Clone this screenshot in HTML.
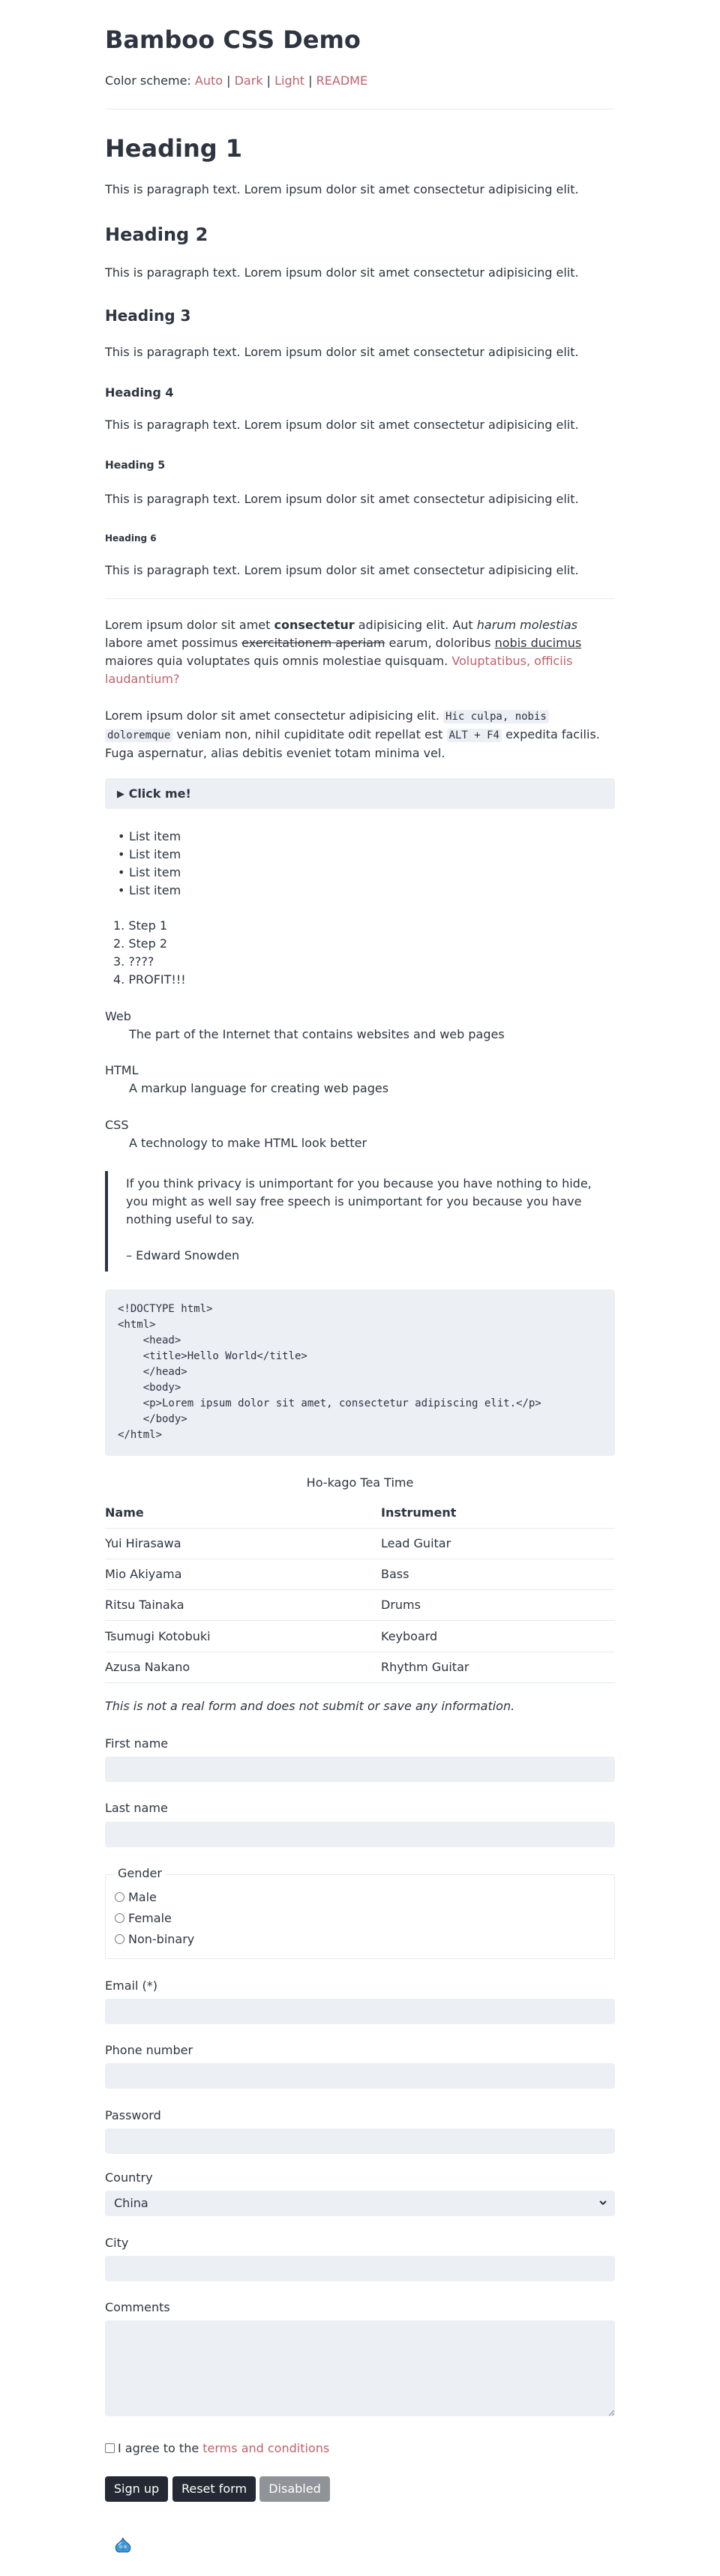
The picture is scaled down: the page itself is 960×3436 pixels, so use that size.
<!DOCTYPE html>
<html><head><meta charset="utf-8"><style>
*{box-sizing:border-box;margin:0;padding:0}
html,body{width:960px;height:3436px;background:#fff;overflow:hidden}
body{position:relative;font-family:"DejaVu Sans","Liberation Sans",sans-serif;font-size:16px;line-height:24px;color:#2e3440}
.a{position:absolute;left:140px;width:680px;white-space:nowrap}
h1,h2,h3,h4,h5,h6{font-weight:bold;line-height:1.2}
a{color:#bf616a;text-decoration:none}
.hr{position:absolute;left:140px;width:680px;height:1px;background:#e5e9f0}
code{font-family:"DejaVu Sans Mono",monospace;font-size:14px;background:#eceff4;border-radius:3px;padding:1px 3px}
.inp{position:absolute;left:140px;width:680px;background:#eceff4;border-radius:4px}
.btn{position:absolute;top:3303px;height:34px;line-height:34px;color:#fff;background:#242933;border-radius:4px;text-align:center;font-size:16px}
.radio{display:inline-block;width:13px;height:13px;border:1px solid #767676;border-radius:50%;vertical-align:-1px;margin-right:5px;background:#fff}
.row{position:absolute;left:140px;width:680px;height:41px;border-bottom:1.5px solid #e5e9f0}
.row span{position:absolute;top:8px}
.b{display:inline-block;width:15px}
</style></head><body>
<h1 class="a" style="top:34px;font-size:32px">Bamboo CSS Demo</h1>
<div class="a" style="top:96px">Color scheme: <a>Auto</a> | <a>Dark</a> | <a>Light</a> | <a>README</a></div>
<div class="hr" style="top:145px"></div>
<h1 class="a" style="top:179px;font-size:32px">Heading 1</h1>
<div class="a" style="top:241px">This is paragraph text. Lorem ipsum dolor sit amet consectetur adipisicing elit.</div>
<h2 class="a" style="top:299px;font-size:24px">Heading 2</h2>
<div class="a" style="top:352px">This is paragraph text. Lorem ipsum dolor sit amet consectetur adipisicing elit.</div>
<h3 class="a" style="top:409px;font-size:20px">Heading 3</h3>
<div class="a" style="top:458px">This is paragraph text. Lorem ipsum dolor sit amet consectetur adipisicing elit.</div>
<h4 class="a" style="top:514px;font-size:16px">Heading 4</h4>
<div class="a" style="top:555px">This is paragraph text. Lorem ipsum dolor sit amet consectetur adipisicing elit.</div>
<h5 class="a" style="top:613px;font-size:14px">Heading 5</h5>
<div class="a" style="top:654px">This is paragraph text. Lorem ipsum dolor sit amet consectetur adipisicing elit.</div>
<h6 class="a" style="top:711px;font-size:12px">Heading 6</h6>
<div class="a" style="top:749px">This is paragraph text. Lorem ipsum dolor sit amet consectetur adipisicing elit.</div>
<div class="hr" style="top:798px"></div>
<div class="a" style="top:822px">Lorem ipsum dolor sit amet <b>consectetur</b> adipisicing elit. Aut <i>harum molestias</i><br>labore amet possimus <s>exercitationem aperiam</s> earum, doloribus <u>nobis ducimus</u><br>maiores quia voluptates quis omnis molestiae quisquam. <a>Voluptatibus, officiis</a><br><a>laudantium?</a></div>
<div class="a" style="top:943px">Lorem ipsum dolor sit amet consectetur adipisicing elit. <code>Hic culpa, nobis</code><br><code>doloremque</code> veniam non, nihil cupiditate odit repellat est <code>ALT + F4</code> expedita facilis.<br>Fuga aspernatur, alias debitis eveniet totam minima vel.</div>
<div class="a" style="top:1038px;height:41px;background:#eceff4;border-radius:4px;padding:9px 0 0 16px;font-weight:bold"><span style="font-size:13px;vertical-align:1px">▶</span> Click me!</div>
<div class="a" style="top:1104px;left:157px"><span class="b">•</span>List item<br><span class="b">•</span>List item<br><span class="b">•</span>List item<br><span class="b">•</span>List item</div>
<div class="a" style="top:1223px;left:151px">1. Step 1<br>2. Step 2<br>3. ????<br>4. PROFIT!!!</div>
<div class="a" style="top:1344px">Web</div>
<div class="a" style="top:1368px;left:172px">The part of the Internet that contains websites and web pages</div>
<div class="a" style="top:1416px">HTML</div>
<div class="a" style="top:1440px;left:172px">A markup language for creating web pages</div>
<div class="a" style="top:1489px">CSS</div>
<div class="a" style="top:1513px;left:172px">A technology to make HTML look better</div>
<div style="position:absolute;left:140px;top:1562px;width:4px;height:134px;background:#2e3440"></div>
<div class="a" style="top:1567px;left:168px">If you think privacy is unimportant for you because you have nothing to hide,<br>you might as well say free speech is unimportant for you because you have<br>nothing useful to say.<br><br>– Edward Snowden</div>
<pre class="a" style="top:1720px;height:222px;background:#eceff4;border-radius:4px;padding:16px 17px;font-family:'DejaVu Sans Mono',monospace;font-size:14px;line-height:21px;white-space:pre">&lt;!DOCTYPE html&gt;
&lt;html&gt;
    &lt;head&gt;
    &lt;title&gt;Hello World&lt;/title&gt;
    &lt;/head&gt;
    &lt;body&gt;
    &lt;p&gt;Lorem ipsum dolor sit amet, consectetur adipiscing elit.&lt;/p&gt;
    &lt;/body&gt;
&lt;/html&gt;</pre>
<div class="a" style="top:1966px;text-align:center">Ho-kago Tea Time</div>
<div class="row" style="top:1998px;font-weight:bold"><span style="left:0">Name</span><span style="left:368px">Instrument</span></div>
<div class="row" style="top:2039px"><span style="left:0">Yui Hirasawa</span><span style="left:368px">Lead Guitar</span></div>
<div class="row" style="top:2080px"><span style="left:0">Mio Akiyama</span><span style="left:368px">Bass</span></div>
<div class="row" style="top:2121px"><span style="left:0">Ritsu Tainaka</span><span style="left:368px">Drums</span></div>
<div class="row" style="top:2163px"><span style="left:0">Tsumugi Kotobuki</span><span style="left:368px">Keyboard</span></div>
<div class="row" style="top:2204px"><span style="left:0">Azusa Nakano</span><span style="left:368px">Rhythm Guitar</span></div>
<div class="a" style="top:2264px;font-style:italic">This is not a real form and does not submit or save any information.</div>
<div class="a" style="top:2314px">First name</div>
<div class="inp" style="top:2343px;height:34px"></div>
<div class="a" style="top:2400px">Last name</div>
<div class="inp" style="top:2430px;height:34px"></div>
<div style="position:absolute;left:140px;top:2500px;width:680px;height:113px;border:1px solid #e5e9f0;border-radius:4px"></div>
<div class="a" style="top:2487px;left:153px;width:auto;background:#fff;padding:0 4px">Gender</div>
<div class="a" style="top:2519px;left:153px"><span class="radio"></span>Male</div>
<div class="a" style="top:2547px;left:153px"><span class="radio"></span>Female</div>
<div class="a" style="top:2575px;left:153px"><span class="radio"></span>Non-binary</div>
<div class="a" style="top:2637px">Email (*)</div>
<div class="inp" style="top:2666px;height:34px"></div>
<div class="a" style="top:2723px">Phone number</div>
<div class="inp" style="top:2752px;height:34px"></div>
<div class="a" style="top:2810px">Password</div>
<div class="inp" style="top:2839px;height:34px"></div>
<div class="a" style="top:2893px">Country</div>
<div class="inp" style="top:2922px;height:34px;padding:5px 0 0 12px">China<svg style="position:absolute;right:11px;top:13px" width="10" height="7" viewBox="0 0 10 7"><path d="M1 1l4 4 4-4" fill="none" stroke="#2e3440" stroke-width="2"/></svg></div>
<div class="a" style="top:2980px">City</div>
<div class="inp" style="top:3009px;height:34px"></div>
<div class="a" style="top:3066px">Comments</div>
<div class="inp" style="top:3095px;height:128px"><svg style="position:absolute;right:1px;bottom:1px" width="8" height="8"><path d="M1 8L8 1M5 8L8 5" stroke="#888" stroke-width="1"/></svg></div>
<div class="a" style="top:3254px"><span style="display:inline-block;width:13px;height:13px;border:1px solid #767676;border-radius:2px;vertical-align:-1px;margin-right:4px"></span>I agree to the <a>terms and conditions</a></div>
<div class="btn" style="left:140px;width:84px">Sign up</div>
<div class="btn" style="left:230px;width:111px">Reset form</div>
<div class="btn" style="left:346px;width:94px;background:#909398">Disabled</div>
<svg style="position:absolute;left:152px;top:3384px" width="24" height="22" viewBox="0 0 24 22">
<path d="M12 1C11 5 7 7 4 10C1 13 2 19 6 20L18 20C22 19 23 13 20 10C17 7 13 5 12 1Z" fill="#3a9ae0" stroke="#1f4f8a" stroke-width="1"/>
<path d="M6 11C7 9 9 8 10 7" stroke="#bfe4ff" stroke-width="1.5" fill="none"/>
<circle cx="9" cy="13" r="1.6" fill="#fff"/><circle cx="15" cy="13" r="1.6" fill="#fff"/>
<circle cx="9" cy="13" r=".8" fill="#333"/><circle cx="15" cy="13" r=".8" fill="#333"/>
<path d="M9 16Q12 19 15 16Z" fill="#d33"/>
</svg>
</body></html>
